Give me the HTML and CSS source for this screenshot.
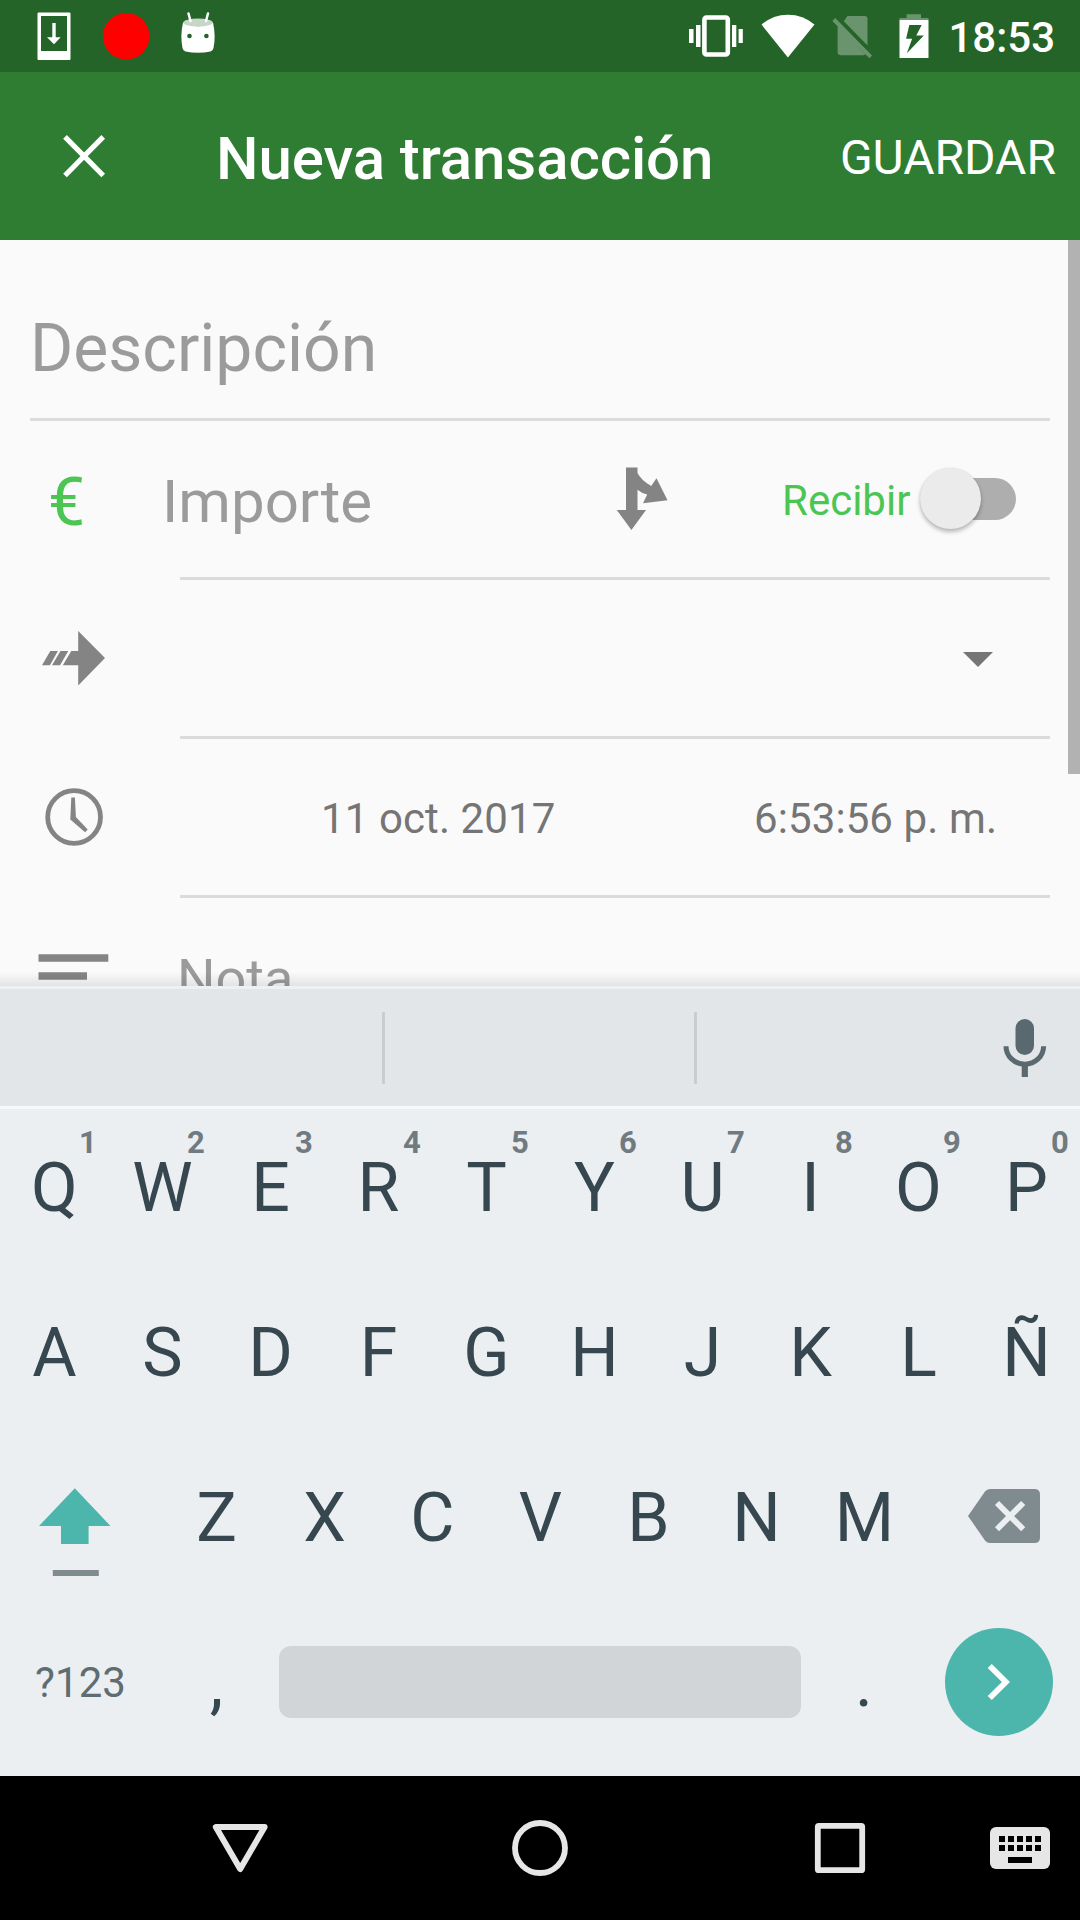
FILE: index.html
```html
<!DOCTYPE html>
<html lang="es">
<head>
<meta charset="utf-8">
<title>Nueva transacción</title>
<link rel="stylesheet" href="styles.css">
</head>
<body>
<div class="screen">
  <div class="status">
    <svg class="st-download" width="34" height="49" viewBox="37 12 34 49"><path fill="#fff" fill-rule="evenodd" d="M38.5 12.5h31a1 1 0 0 1 1 1v45.500a1 1 0 0 1-1 1h-31a1 1 0 0 1-1-1V13.500a1 1 0 0 1 1-1zM41 16v35h26V16z"/><path fill="#fff" d="M52.300 23h3.400v14.300h5L54 44.300l-7-7h5.300z"/></svg>
    <svg class="st-record" width="48" height="48" viewBox="102 12 48 48"><circle cx="126.200" cy="36.200" r="23.300" fill="#f00"/></svg>
    <svg class="st-android" width="36" height="44" viewBox="180 11 36 44"><path fill="#fff" d="M183 22.500Q198 30 213 22.500Q216 36 213.500 48Q213 51 210.500 51.500Q198 54 185.500 51.500Q183 51 182.500 48Q180 36 183 22.500z"/><ellipse cx="198" cy="22.500" rx="14.800" ry="4" fill="#c6d7c8"/><path d="M188.500 13.500l2 7.500M208 13.500L206 21" stroke="#fff" stroke-width="2.500" stroke-linecap="round"/><circle cx="189.500" cy="36" r="2.300" fill="#246428"/><circle cx="206.400" cy="36" r="2.300" fill="#246428"/></svg>
    <span class="grow"></span>
    <svg class="st-vibrate" width="56" height="44" viewBox="688 14 56 44"><rect x="704.400" y="17.500" width="23.400" height="37" rx="2" fill="none" stroke="#fff" stroke-width="4.600"/><path fill="#fff" d="M689 29h4.500v14H689zM696 25h4.500v22H696zM732 25h4.300v22H732zM738.600 29h4.200v14h-4.200z"/></svg>
    <svg class="st-wifi" width="54" height="44" viewBox="760.500 13.500 54 44"><path fill="#fff" d="M787.400 57L761 24Q772.500 14.200 787.500 14.200T814 24z"/></svg>
    <svg class="st-sim" width="42" height="44" viewBox="831 15 42 44"><path fill="#6a946d" d="M847.500 16H865q2.500 0 2.500 2.500V45.500L843.800 21.300zM837.600 26L865.500 54.500q-1 .7-2.500.7H841q-3.400 0-3.400-3zM832.400 21l2.800-3L872 55.500l-2.500 2.700z"/></svg>
    <svg class="st-battery" width="30" height="46" viewBox="898.500 13 30 46"><path fill="#6a946d" d="M906 14.300h14.500V18h7.500v2h-29v-2h7z"/><path fill="#fff" fill-rule="evenodd" d="M899 20h29v38h-29zM908.800 25l-3.200 13.700h6L906.400 53.300 923.300 35.500h-7.500L921.200 25z"/></svg>
    <span class="clock">18:53</span>
  </div>
  <header class="appbar">
    <svg class="close" width="44" height="44" viewBox="62 134 44 44"><path d="M65 136.800L103.200 175.500M103.200 136.800L65 175.500" stroke="#fff" stroke-width="5.200"/></svg>
    <h1 class="title">Nueva transacción</h1>
    <span class="save">GUARDAR</span>
  </header>
  <main class="form">
    <div class="row row-desc"><span class="hint hint-desc">Descripción</span></div>
    <div class="line line-full"></div>
    <div class="row">
      <span class="euro">€</span>
      <span class="hint hint-amount">Importe</span>
      <svg class="split" width="52" height="64" viewBox="616 467 52 64"><path fill="#848484" d="M626 467.500h11.500V473Q641 480 651.200 486L656.500 478.300 667.500 500.200 643 503.300 647.200 494.500Q642 493.500 637.500 489.700V510h8.500L631.400 530 616.800 510H626z"/></svg>
      <span class="receive">Recibir</span>
      <span class="switch"><span class="thumb"></span></span>
    </div>
    <div class="line"></div>
    <div class="row">
      <svg class="transfer" width="64" height="56" viewBox="42 630 64 56"><path fill="#848484" d="M78.200 631L105 658 78.200 685.500V665.300H62.800L71.300 651h6.900zM60.500 651H68.300L60 665.300H52zM50.300 651H57.900L49.900 665.300H42z"/></svg>
      <span class="caret"></span>
    </div>
    <div class="line"></div>
    <div class="row">
      <svg class="time-icon" width="60" height="60" viewBox="43.500 787 60 60"><circle cx="73.600" cy="817" r="26.400" fill="none" stroke="#848484" stroke-width="4.800"/><path fill="#848484" d="M70.800 797.500h3.600L75.400 817 87.200 829.500 84.600 832.300 69.800 819.500z"/></svg>
      <span class="date">11 oct. 2017</span>
      <span class="time">6:53:56 p. m.</span>
    </div>
    <div class="line"></div>
    <div class="row row-note">
      <svg class="note-icon" width="72" height="46" viewBox="38 953 72 46"><path fill="#848484" d="M38.500 954.200h69.800v7.600H38.500zM38.500 972.200H87v7.600H38.500zM38.500 990.200h69.800v7.600H38.500z"/></svg>
      <span class="hint hint-note">Nota</span>
    </div>
    <div class="scrollbar"></div>
    <div class="shade"></div>
  </main>
  <section class="keyboard">
    <div class="suggest">
      <span class="sep sep-a"></span><span class="sep"></span>
      <svg class="mic" width="44" height="60" viewBox="1003.500 1017 44 60"><path fill="#5a686f" d="M1016 1027.300a9.250 9.250 0 0 1 18.500 0v17.400a9.250 9.250 0 0 1-18.500 0zM1022.200 1063h6.200v13h-6.200z"/><path d="M1006.500 1045.200a18.800 18 0 0 0 37.600 0" fill="none" stroke="#5a686f" stroke-width="5"/></svg>
    </div>
    <div class="keys first">
      <span class="key">Q<sup>1</sup></span><span class="key">W<sup>2</sup></span><span class="key">E<sup>3</sup></span><span class="key">R<sup>4</sup></span><span class="key">T<sup>5</sup></span><span class="key">Y<sup>6</sup></span><span class="key">U<sup>7</sup></span><span class="key">I<sup>8</sup></span><span class="key">O<sup>9</sup></span><span class="key">P<sup>0</sup></span>
    </div>
    <div class="keys">
      <span class="key">A</span><span class="key">S</span><span class="key">D</span><span class="key">F</span><span class="key">G</span><span class="key">H</span><span class="key">J</span><span class="key">K</span><span class="key">L</span><span class="key">Ñ</span>
    </div>
    <div class="keys">
      <span class="wide"><svg class="shift" width="74" height="90" viewBox="38 1487 74 90"><path fill="#4db6ac" d="M74.800 1488.300L110.500 1526H88.600v18H61V1526H39z"/><path fill="#808b90" d="M52.800 1570h46v6h-46z"/></svg></span>
      <span class="key">Z</span><span class="key">X</span><span class="key">C</span><span class="key">V</span><span class="key">B</span><span class="key">N</span><span class="key">M</span>
      <span class="wide"><svg class="back" width="74" height="56" viewBox="967 1488 74 56"><path fill="#808b90" d="M968 1516L985 1491.500Q986.800 1489 990 1489H1034.500q5.500 0 5.500 5.500v43q0 5.500-5.500 5.500H990Q986.800 1543 985 1540.500z"/><path d="M997 1503l26.200 26.200M1023.200 1503L997 1529.200" stroke="#ebeff2" stroke-width="5.800"/></svg></span>
    </div>
    <div class="keys last">
      <span class="symbols">?123</span>
      <span class="key comma">,</span>
      <span class="space"></span>
      <span class="key period">.</span>
      <span class="enter"><svg width="24" height="38" viewBox="987 1662 24 38"><path fill="#fff" d="M991.800 1663L1010 1681 991.800 1699 987.700 1695 1001.900 1681 987.700 1667z"/></svg></span>
    </div>
  </section>
  <nav class="navbar">
    <svg class="nav-back" width="58" height="52" viewBox="211 1822 58 52"><path d="M215.800 1827.100H264.600L240.200 1869z" fill="none" stroke="#e6e6e6" stroke-width="6" stroke-linejoin="round"/></svg>
    <svg class="nav-home" width="58" height="58" viewBox="511 1819 58 58"><circle cx="540" cy="1848" r="25" fill="none" stroke="#e6e6e6" stroke-width="5.800"/></svg>
    <svg class="nav-recent" width="52" height="52" viewBox="814 1822 52 52"><rect x="817.800" y="1825.800" width="44.400" height="44.400" rx="1" fill="none" stroke="#e6e6e6" stroke-width="5.800" stroke-linejoin="round"/></svg>
    <svg class="nav-ime" width="60" height="42" viewBox="990 1827 60 42"><rect x="990" y="1827" width="60" height="42" rx="6" fill="#e6e6e6"/><path d="M999 1839h42M999 1848h42" stroke="#000" stroke-width="6" stroke-dasharray="6 3"/><path d="M1008 1857h24v6h-24z"/></svg>
  </nav>
</div>
</body>
</html>
```
FILE: styles.css
```css
* { box-sizing: border-box; }
body { margin: 0; font-family: Roboto, sans-serif; background: #fafafa; }
svg { display: block; flex: none; }
.screen { width: 1080px; height: 1920px; display: flex; flex-direction: column; overflow: hidden; }
.grow { flex: 1; }

.status { height: 72px; flex: none; background: #246428; display: flex; align-items: flex-start; padding: 0 25px 0 37px; }
.st-download { margin-top: 12px; }
.st-record { margin: 12px 0 0 31px; }
.st-android { margin: 11px 0 0 30px; }
.st-vibrate { margin: 14px 16.5px 0 0; }
.st-wifi { margin: 13.5px 16.5px 0 0; }
.st-sim { margin: 15px 25.5px 0 0; }
.st-battery { margin-top: 13px; }
.clock { width: 126.5px; text-align: right; color: #fff; font-size: 42px; font-weight: 500; line-height: 75px; }

.appbar { height: 168px; flex: none; background: #2e7d32; display: flex; align-items: center; padding: 0 24px 0 62px; color: #fff; }
.close { margin-right: 110px; }
.title { margin: 0; padding-top: 5px; font-size: 60px; font-weight: 500; line-height: 70px; letter-spacing: -.08px; flex: 1; white-space: nowrap; }
.save { font-size: 48px; line-height: 60px; padding-top: 3px; }

.form { height: 746px; flex: none; position: relative; overflow: hidden; background: #fafafa; }
.row { height: 156px; display: flex; align-items: center; }
.row-desc { height: 178px; padding: 39px 0 0 30px; }
.line { height: 3px; margin: 0 30px 0 180px; background: #dbdbdb; }
.line-full { margin-left: 30px; }
.hint { color: #9b9b9b; line-height: 80px; }
.hint-desc { font-size: 66px; }
.euro { width: 115px; padding: 8px 0 0 48px; font-size: 66px; line-height: 80px; color: #4cc552; }
.hint-amount { width: 453px; margin-left: 47px; padding-top: 6px; font-size: 60px; }
.split { margin-left: 1px; }
.receive { width: 133px; margin-left: 114px; padding-top: 3px; font-size: 42px; line-height: 60px; color: #4cc552; }
.switch { width: 78px; height: 42px; margin-left: 23px; border-radius: 21px; background: #aeaeae; position: relative; }
.thumb { position: absolute; left: -18px; top: -10px; width: 61px; height: 61px; border-radius: 50%; background: #ebebeb; box-shadow: 0 3px 4px rgba(0,0,0,.26), 0 0 2px rgba(0,0,0,.1); }
.transfer { margin-left: 42px; }
.caret { margin: 3px 0 0 857px; border: 15px solid transparent; border-top-color: #757575; border-bottom: 0; }
.time-icon { margin-left: 43.5px; }
.date, .time { font-size: 42px; line-height: 60px; padding-top: 4px; letter-spacing: .1px; color: #757575; white-space: nowrap; }
.date { width: 433px; margin-left: 217.5px; }
.row-note { align-items: flex-start; }
.note-icon { margin: 55px 0 0 38px; }
.hint-note { margin: 41px 0 0 67px; font-size: 54px; }
.scrollbar { position: absolute; right: 0; top: 0; width: 12px; height: 534px; background: #b2b2b2; }
.shade { position: absolute; left: 0; right: 0; bottom: 0; height: 14px; background: linear-gradient(rgba(0,0,0,0), rgba(0,0,0,.09)); }

.keyboard { height: 790px; flex: none; background: #ebeff2; color: #37474f; }
.suggest { height: 123px; display: flex; align-items: center; border-top: 3px solid #eef0f2; border-bottom: 3px solid #f6f8f9; background: #e2e6e9; }
.sep { width: 3px; height: 72px; background: #c9cdd0; }
.sep-a { margin: 0 309px 0 382px; }
.mic { margin-left: 306px; }
.keys { height: 165px; display: flex; align-items: center; }
.first { height: 161px; padding-bottom: 4px; }
.last { height: 164px; }
.key { width: 108px; flex: none; padding-left: 1px; text-align: center; font-size: 68px; line-height: 80px; position: relative; }
.key sup { position: absolute; left: 68px; top: -23px; width: 40px; font-size: 31px; line-height: 36px; font-weight: 700; color: #707b81; }
.wide { width: 162px; flex: none; }
.shift { margin: 28px 0 0 38px; }
.back { margin: -3px 0 0 49px; }
.symbols { width: 162px; padding: 2px 0 0 35px; font-size: 42px; line-height: 60px; letter-spacing: .1px; color: #5f6d73; }
.comma, .period { padding-top: 2px; }
.period { padding-left: 0; }
.space { width: 522px; height: 72px; margin: 0 9px; border-radius: 12px; background: #d1d5d8; }
.enter { width: 108px; height: 108px; margin-left: 27px; border-radius: 50%; background: #4db6ac; display: flex; align-items: center; justify-content: center; }

.navbar { height: 144px; flex: none; background: #000; display: flex; align-items: center; padding-left: 211px; }
.nav-home { margin-left: 242px; }
.nav-recent { margin-left: 245px; }
.nav-ime { margin-left: 124px; }
```
